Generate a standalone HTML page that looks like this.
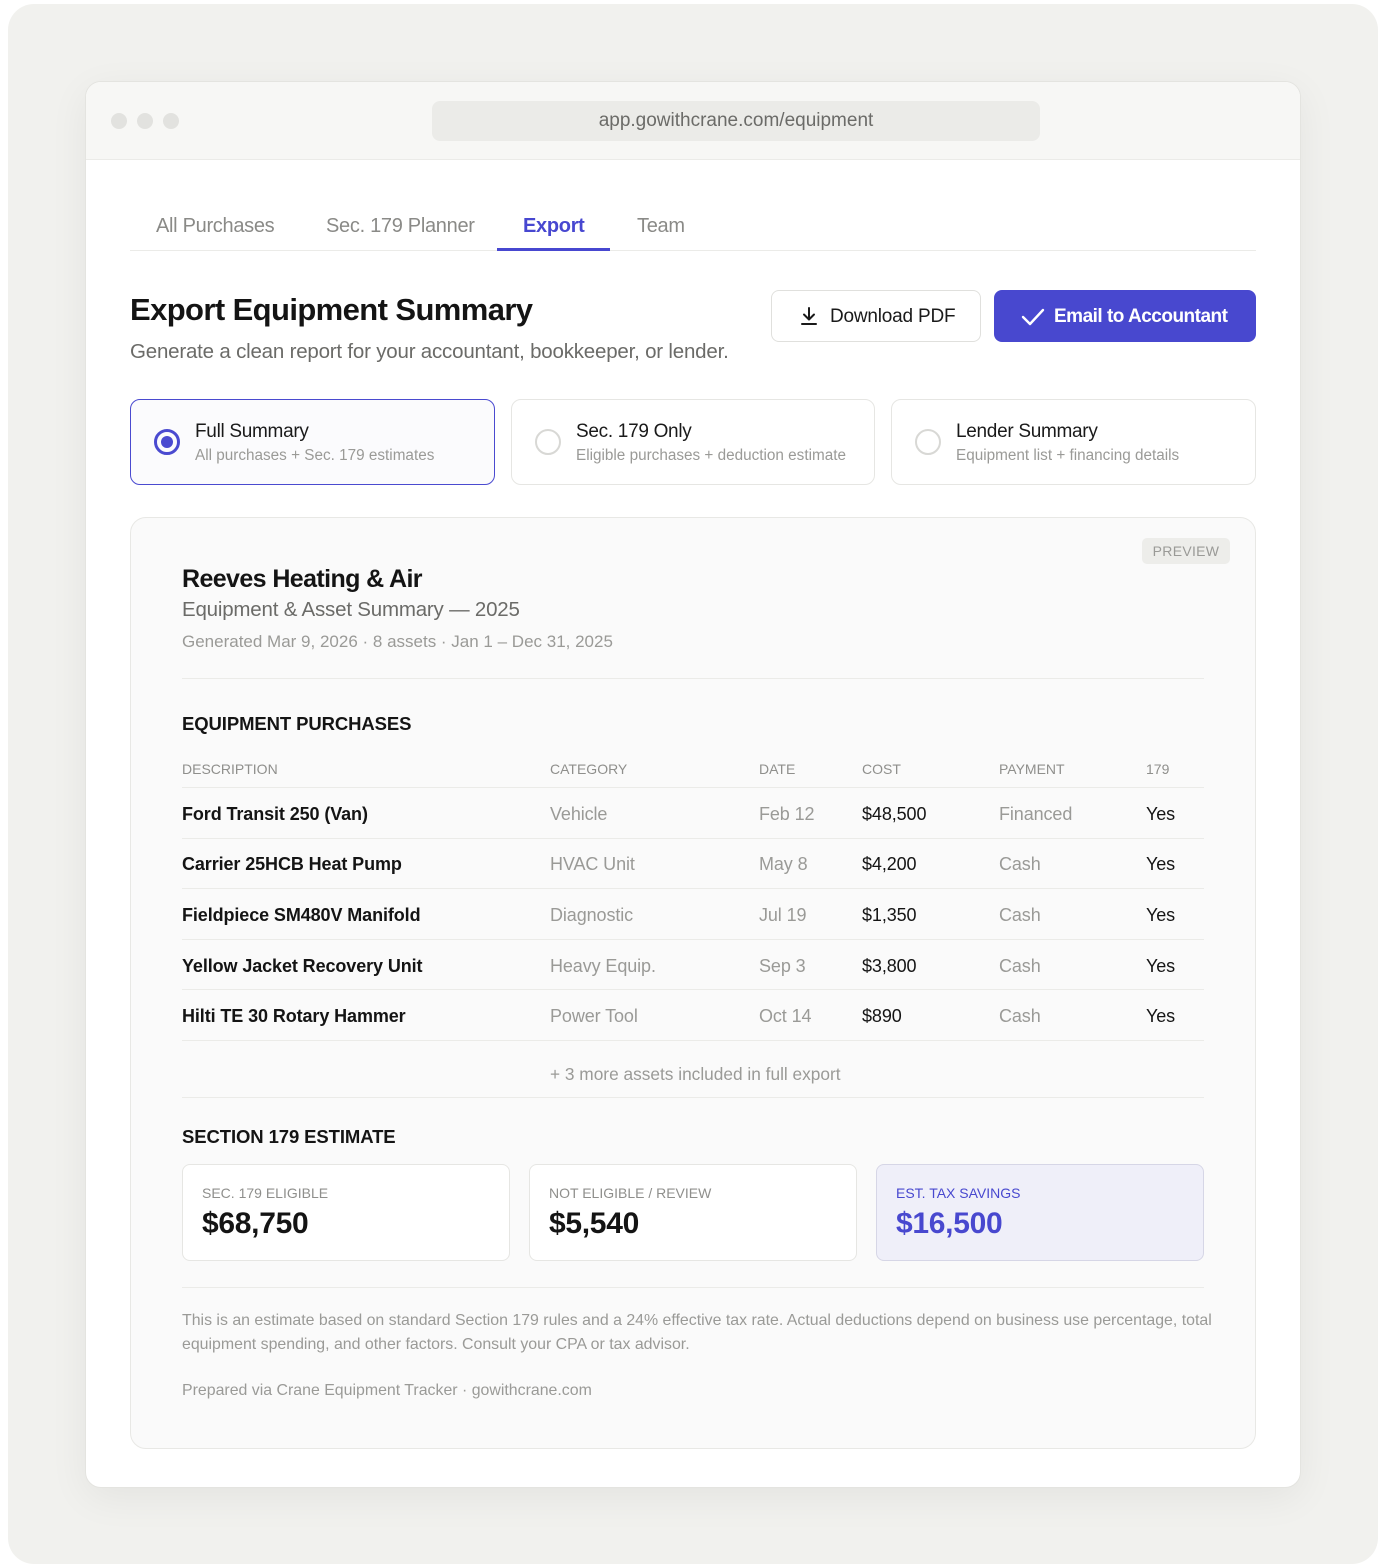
<!DOCTYPE html>
<html><head><meta charset="utf-8"><style>
*{box-sizing:border-box;margin:0;padding:0}
body{width:1386px;height:1568px;background:#fff;font-family:"Liberation Sans",sans-serif;position:relative;overflow:hidden;letter-spacing:0}
.a{position:absolute;white-space:nowrap}
.outer{left:8px;top:4px;width:1370px;height:1560px;background:#f1f1ee;border-radius:26px}
.win{left:85px;top:81px;width:1216px;height:1407px;background:#fff;border-radius:16px;border:1px solid #e4e4e0;box-shadow:0 10px 40px rgba(0,0,0,0.06);overflow:hidden}
.bar{left:0;top:0;width:1216px;height:78px;background:#f7f7f5;border-bottom:1px solid #ebebe8}
.dot{width:16px;height:16px;border-radius:50%;background:#e2e2df;top:31px}
.url{left:346px;top:19px;width:608px;height:40px;background:#ebebe8;border-radius:8px;text-align:center;line-height:40px;font-size:19px;color:#6b6b68}
.tab{font-size:20px;color:#8a8a87;top:212px;line-height:28px;letter-spacing:-0.3px}
.opt{top:399px;height:86px;width:365px;border:1px solid #e6e6e3;border-radius:10px;background:#fff}
.radio{left:23px;top:29px;width:26px;height:26px;border-radius:50%;border:2px solid #d8d8d5}
.ot{left:64px;top:21px;font-size:19px;color:#1a1a1a;letter-spacing:-0.3px}
.os{left:64px;top:47px;font-size:15.3px;color:#9a9a97}
.row{left:182px;width:1022px;height:1px;background:#ebebe8}
.cell{font-size:18px;line-height:24px;letter-spacing:-0.1px}
.h{font-size:14px;color:#8f8f8c;top:760px;line-height:18px;letter-spacing:0}
.card{top:1164px;height:97px;width:328px;border:1px solid #e6e6e3;border-radius:8px;background:#fff}
.cl{left:19px;top:20px;font-size:14px;color:#8f8f8c}
.cv{left:19px;top:42px;font-size:30px;font-weight:bold;color:#141414;letter-spacing:-0.3px}
</style></head><body>
<div class="a outer"></div>
<div class="a win">
 <div class="a bar"></div>
 <div class="a dot" style="left:25px"></div>
 <div class="a dot" style="left:51px"></div>
 <div class="a dot" style="left:77px"></div>
 <div class="a url">app.gowithcrane.com/equipment</div>
</div>
<div class="a tab" style="left:156px">All Purchases</div>
<div class="a tab" style="left:326px">Sec. 179 Planner</div>
<div class="a tab" style="left:523px;color:#4747d0;font-weight:bold">Export</div>
<div class="a tab" style="left:637px">Team</div>
<div class="a" style="left:130px;top:250px;width:1126px;height:1px;background:#ebebe8"></div>
<div class="a" style="left:497px;top:248px;width:113px;height:3px;background:#4747d0"></div>

<div class="a" style="left:130px;top:292px;font-size:31px;font-weight:bold;color:#141414;letter-spacing:-0.6px">Export Equipment Summary</div>
<div class="a" style="left:130px;top:340px;font-size:20.5px;color:#6b6b68;letter-spacing:-0.2px">Generate a clean report for your accountant, bookkeeper, or lender.</div>

<div class="a" style="left:771px;top:290px;width:210px;height:52px;border:1px solid #e0e0dd;border-radius:8px;background:#fff"></div>
<svg class="a" style="left:799px;top:306px" width="20" height="20" viewBox="0 0 20 20" fill="none" stroke="#1a1a1a" stroke-width="2" stroke-linecap="round" stroke-linejoin="round"><path d="M10 2v11M5 8.5l5 5 5-5M3 18h14"/></svg>
<div class="a" style="left:830px;top:305px;font-size:19px;color:#1a1a1a;line-height:24px;letter-spacing:-0.2px">Download PDF</div>
<div class="a" style="left:994px;top:290px;width:262px;height:52px;border-radius:8px;background:#4848cf"></div>
<svg class="a" style="left:1021px;top:306px" width="24" height="22" viewBox="0 0 24 22" fill="none" stroke="#fff" stroke-width="2.4" stroke-linecap="round" stroke-linejoin="round"><path d="M2 11l7 7L22 4"/></svg>
<div class="a" style="left:1054px;top:305px;font-size:19px;color:#fff;font-weight:bold;line-height:24px;letter-spacing:-0.5px">Email to Accountant</div>

<div class="a opt" style="left:130px;border-color:#4a4ad0;background:#fbfbfd">
 <div class="a radio" style="border:3px solid #4a4ad0"><div class="a" style="left:4px;top:4px;width:12px;height:12px;border-radius:50%;background:#4a4ad0"></div></div>
 <div class="a ot">Full Summary</div><div class="a os">All purchases + Sec. 179 estimates</div>
</div>
<div class="a opt" style="left:511px;width:364px">
 <div class="a radio"></div>
 <div class="a ot">Sec. 179 Only</div><div class="a os">Eligible purchases + deduction estimate</div>
</div>
<div class="a opt" style="left:891px">
 <div class="a radio"></div>
 <div class="a ot">Lender Summary</div><div class="a os">Equipment list + financing details</div>
</div>

<div class="a" style="left:130px;top:517px;width:1126px;height:932px;background:#fafafa;border:1px solid #e8e8e5;border-radius:16px"></div>
<div class="a" style="left:1142px;top:538px;width:88px;height:26px;background:#ededea;border-radius:5px;font-size:14px;color:#9a9a97;text-align:center;line-height:26px;letter-spacing:0.3px">PREVIEW</div>

<div class="a" style="left:182px;top:565px;font-size:25px;font-weight:bold;color:#141414;letter-spacing:-0.6px">Reeves Heating &amp; Air</div>
<div class="a" style="left:182px;top:598px;font-size:20.5px;color:#6b6b68;letter-spacing:-0.2px">Equipment &amp; Asset Summary — 2025</div>
<div class="a" style="left:182px;top:632px;font-size:17px;color:#9a9a97">Generated Mar 9, 2026 · 8 assets · Jan 1 – Dec 31, 2025</div>
<div class="a row" style="top:678px"></div>

<div class="a" style="left:182px;top:713px;font-size:18.5px;font-weight:bold;color:#141414;letter-spacing:-0.1px">EQUIPMENT PURCHASES</div>
<div class="a h" style="left:182px">DESCRIPTION</div>
<div class="a h" style="left:550px">CATEGORY</div>
<div class="a h" style="left:759px">DATE</div>
<div class="a h" style="left:862px">COST</div>
<div class="a h" style="left:999px">PAYMENT</div>
<div class="a h" style="left:1146px">179</div>
<div class="a row" style="top:787px"></div>

<div class="a cell" style="left:182px;top:802px;font-weight:bold;color:#141414">Ford Transit 250 (Van)</div>
<div class="a cell" style="left:550px;top:802px;color:#9a9a97">Vehicle</div>
<div class="a cell" style="left:759px;top:802px;color:#9a9a97">Feb 12</div>
<div class="a cell" style="left:862px;top:802px;color:#141414">$48,500</div>
<div class="a cell" style="left:999px;top:802px;color:#9a9a97">Financed</div>
<div class="a cell" style="left:1146px;top:802px;color:#141414">Yes</div>
<div class="a row" style="top:838px"></div>

<div class="a cell" style="left:182px;top:852px;font-weight:bold;color:#141414">Carrier 25HCB Heat Pump</div>
<div class="a cell" style="left:550px;top:852px;color:#9a9a97">HVAC Unit</div>
<div class="a cell" style="left:759px;top:852px;color:#9a9a97">May 8</div>
<div class="a cell" style="left:862px;top:852px;color:#141414">$4,200</div>
<div class="a cell" style="left:999px;top:852px;color:#9a9a97">Cash</div>
<div class="a cell" style="left:1146px;top:852px;color:#141414">Yes</div>
<div class="a row" style="top:888px"></div>

<div class="a cell" style="left:182px;top:903px;font-weight:bold;color:#141414">Fieldpiece SM480V Manifold</div>
<div class="a cell" style="left:550px;top:903px;color:#9a9a97">Diagnostic</div>
<div class="a cell" style="left:759px;top:903px;color:#9a9a97">Jul 19</div>
<div class="a cell" style="left:862px;top:903px;color:#141414">$1,350</div>
<div class="a cell" style="left:999px;top:903px;color:#9a9a97">Cash</div>
<div class="a cell" style="left:1146px;top:903px;color:#141414">Yes</div>
<div class="a row" style="top:939px"></div>

<div class="a cell" style="left:182px;top:954px;font-weight:bold;color:#141414">Yellow Jacket Recovery Unit</div>
<div class="a cell" style="left:550px;top:954px;color:#9a9a97">Heavy Equip.</div>
<div class="a cell" style="left:759px;top:954px;color:#9a9a97">Sep 3</div>
<div class="a cell" style="left:862px;top:954px;color:#141414">$3,800</div>
<div class="a cell" style="left:999px;top:954px;color:#9a9a97">Cash</div>
<div class="a cell" style="left:1146px;top:954px;color:#141414">Yes</div>
<div class="a row" style="top:989px"></div>

<div class="a cell" style="left:182px;top:1004px;font-weight:bold;color:#141414">Hilti TE 30 Rotary Hammer</div>
<div class="a cell" style="left:550px;top:1004px;color:#9a9a97">Power Tool</div>
<div class="a cell" style="left:759px;top:1004px;color:#9a9a97">Oct 14</div>
<div class="a cell" style="left:862px;top:1004px;color:#141414">$890</div>
<div class="a cell" style="left:999px;top:1004px;color:#9a9a97">Cash</div>
<div class="a cell" style="left:1146px;top:1004px;color:#141414">Yes</div>
<div class="a row" style="top:1040px"></div>

<div class="a" style="left:550px;top:1064px;font-size:17.3px;color:#9a9a97">+ 3 more assets included in full export</div>
<div class="a row" style="top:1097px"></div>

<div class="a" style="left:182px;top:1126px;font-size:18.5px;font-weight:bold;color:#141414;letter-spacing:-0.1px">SECTION 179 ESTIMATE</div>
<div class="a card" style="left:182px"><div class="a cl">SEC. 179 ELIGIBLE</div><div class="a cv">$68,750</div></div>
<div class="a card" style="left:529px"><div class="a cl">NOT ELIGIBLE / REVIEW</div><div class="a cv">$5,540</div></div>
<div class="a card" style="left:876px;background:#efeff9;border-color:#d6d6e6"><div class="a cl" style="color:#4848cf">EST. TAX SAVINGS</div><div class="a cv" style="color:#4848cf">$16,500</div></div>
<div class="a row" style="top:1287px"></div>

<div class="a" style="left:182px;top:1309px;font-size:15.9px;color:#9a9a97;line-height:24px;white-space:normal;width:1030px">This is an estimate based on standard Section 179 rules and a 24% effective tax rate. Actual deductions depend on business use percentage, total equipment spending, and other factors. Consult your CPA or tax advisor.</div>
<div class="a" style="left:182px;top:1382px;font-size:15.9px;color:#9a9a97">Prepared via Crane Equipment Tracker · gowithcrane.com</div>
</body></html>
